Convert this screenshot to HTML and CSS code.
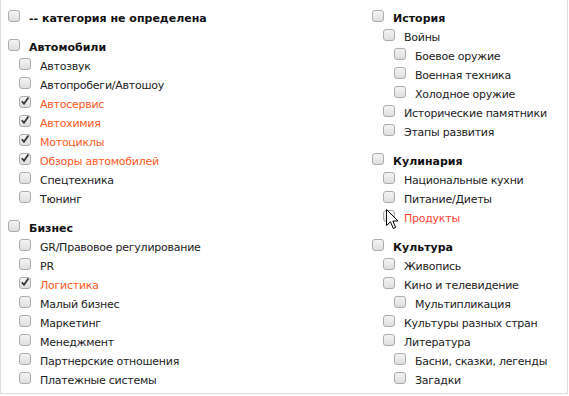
FILE: index.html
```html
<!DOCTYPE html>
<html>
<head>
<meta charset="utf-8">
<link rel="stylesheet" href="styles.css">
</head>
<body>
<div class="box">
  <div class="col left">
    <div class="group first">
      <div class="row top"><span class="cb"></span><span class="lbl b">-- категория не определена</span></div>
    </div>
    <div class="group">
      <div class="row top"><span class="cb"></span><span class="lbl b">Автомобили</span></div>
      <div class="row l1"><span class="cb"></span><span class="lbl">Автозвук</span></div>
      <div class="row l1"><span class="cb"></span><span class="lbl">Автопробеги/Автошоу</span></div>
      <div class="row l1"><span class="cb on"></span><span class="lbl sel">Автосервис</span></div>
      <div class="row l1"><span class="cb on"></span><span class="lbl sel">Автохимия</span></div>
      <div class="row l1"><span class="cb on"></span><span class="lbl sel">Мотоциклы</span></div>
      <div class="row l1"><span class="cb on"></span><span class="lbl sel">Обзоры автомобилей</span></div>
      <div class="row l1"><span class="cb"></span><span class="lbl">Спецтехника</span></div>
      <div class="row l1"><span class="cb"></span><span class="lbl">Тюнинг</span></div>
    </div>
    <div class="group">
      <div class="row top"><span class="cb"></span><span class="lbl b">Бизнес</span></div>
      <div class="row l1"><span class="cb"></span><span class="lbl">GR/Правовое регулирование</span></div>
      <div class="row l1"><span class="cb"></span><span class="lbl">PR</span></div>
      <div class="row l1"><span class="cb on"></span><span class="lbl sel">Логистика</span></div>
      <div class="row l1"><span class="cb"></span><span class="lbl">Малый бизнес</span></div>
      <div class="row l1"><span class="cb"></span><span class="lbl">Маркетинг</span></div>
      <div class="row l1"><span class="cb"></span><span class="lbl">Менеджмент</span></div>
      <div class="row l1"><span class="cb"></span><span class="lbl">Партнерские отношения</span></div>
      <div class="row l1"><span class="cb"></span><span class="lbl">Платежные системы</span></div>
    </div>
  </div>
  <div class="col right">
    <div class="group first">
      <div class="row top"><span class="cb"></span><span class="lbl b">История</span></div>
      <div class="row l1"><span class="cb"></span><span class="lbl">Войны</span></div>
      <div class="row l2"><span class="cb"></span><span class="lbl">Боевое оружие</span></div>
      <div class="row l2"><span class="cb"></span><span class="lbl">Военная техника</span></div>
      <div class="row l2"><span class="cb"></span><span class="lbl">Холодное оружие</span></div>
      <div class="row l1"><span class="cb"></span><span class="lbl">Исторические памятники</span></div>
      <div class="row l1"><span class="cb"></span><span class="lbl">Этапы развития</span></div>
    </div>
    <div class="group">
      <div class="row top"><span class="cb"></span><span class="lbl b">Кулинария</span></div>
      <div class="row l1"><span class="cb"></span><span class="lbl">Национальные кухни</span></div>
      <div class="row l1"><span class="cb"></span><span class="lbl">Питание/Диеты</span></div>
      <div class="row l1 hover"><span class="cb"></span><span class="lbl hov">Продукты</span>
        <svg class="cursor" width="14" height="22" viewBox="0 0 14 22"><path d="M0.5 0.5 L0.5 16.5 L4.5 12.8 L7.3 19.5 L9.6 18.5 L6.9 12 L12 12 Z" fill="#fff" stroke="#000" stroke-width="1" stroke-linejoin="miter"/></svg>
      </div>
    </div>
    <div class="group">
      <div class="row top"><span class="cb"></span><span class="lbl b">Культура</span></div>
      <div class="row l1"><span class="cb"></span><span class="lbl">Живопись</span></div>
      <div class="row l1"><span class="cb"></span><span class="lbl">Кино и телевидение</span></div>
      <div class="row l2"><span class="cb"></span><span class="lbl">Мультипликация</span></div>
      <div class="row l1"><span class="cb"></span><span class="lbl">Культуры разных стран</span></div>
      <div class="row l1"><span class="cb"></span><span class="lbl">Литература</span></div>
      <div class="row l2"><span class="cb"></span><span class="lbl">Басни, сказки, легенды</span></div>
      <div class="row l2"><span class="cb"></span><span class="lbl">Загадки</span></div>
    </div>
  </div>
</div>
</body>
</html>
```
FILE: styles.css
```css
html, body {
  margin: 0;
  padding: 0;
  background: #fff;
}
body {
  width: 569px;
  height: 396px;
  overflow: hidden;
  font-family: "DejaVu Sans", Verdana, sans-serif;
  font-size: 11px;
  color: #222;
}
.box {
  box-sizing: border-box;
  width: 568px;
  height: 394px;
  border: 1px solid #dcdcdc;
  border-top: none;
  overflow: hidden;
  display: grid;
  grid-template-columns: 364px 1fr;
  align-items: start;
  padding: 7px 0 0 7px;
}
.group {
  margin-top: 10px;
}
.group.first {
  margin-top: 0;
  margin-bottom: 2px;
}
.right .group.first {
  margin-bottom: 3px;
}
.row {
  position: relative;
  display: flex;
  align-items: flex-start;
  height: 19px;
  white-space: nowrap;
}
.row.l1 { padding-left: 11px; }
.row.l2 { padding-left: 22px; }
.cb {
  box-sizing: border-box;
  flex: none;
  width: 12px;
  height: 12px;
  margin-top: 3px;
  margin-right: 9px;
  border: 1px solid #acacac;
  border-radius: 3px;
  background: linear-gradient(#f4f4f4, #dedede);
  position: relative;
}
.cb.on::after {
  content: "";
  position: absolute;
  left: 1px;
  top: 0px;
  width: 8px;
  height: 8px;
  background: no-repeat center/8px 8px url("data:image/svg+xml,%3Csvg xmlns='http://www.w3.org/2000/svg' viewBox='0 0 8 8'%3E%3Cpath d='M0.8 4.2 L3 6.8 L7.4 0.6' fill='none' stroke='%23333' stroke-width='1.7'/%3E%3C/svg%3E");
}
.lbl {
  line-height: 15px;
  padding-top: 4px;
  letter-spacing: -0.25px;
}
.lbl.b {
  font-weight: bold;
  color: #111;
  letter-spacing: 0;
}
.lbl.sel {
  color: #ff5a1e;
}
.lbl.hov {
  color: #ff4433;
}
.cursor {
  position: absolute;
  left: 14px;
  top: 2px;
}
```
